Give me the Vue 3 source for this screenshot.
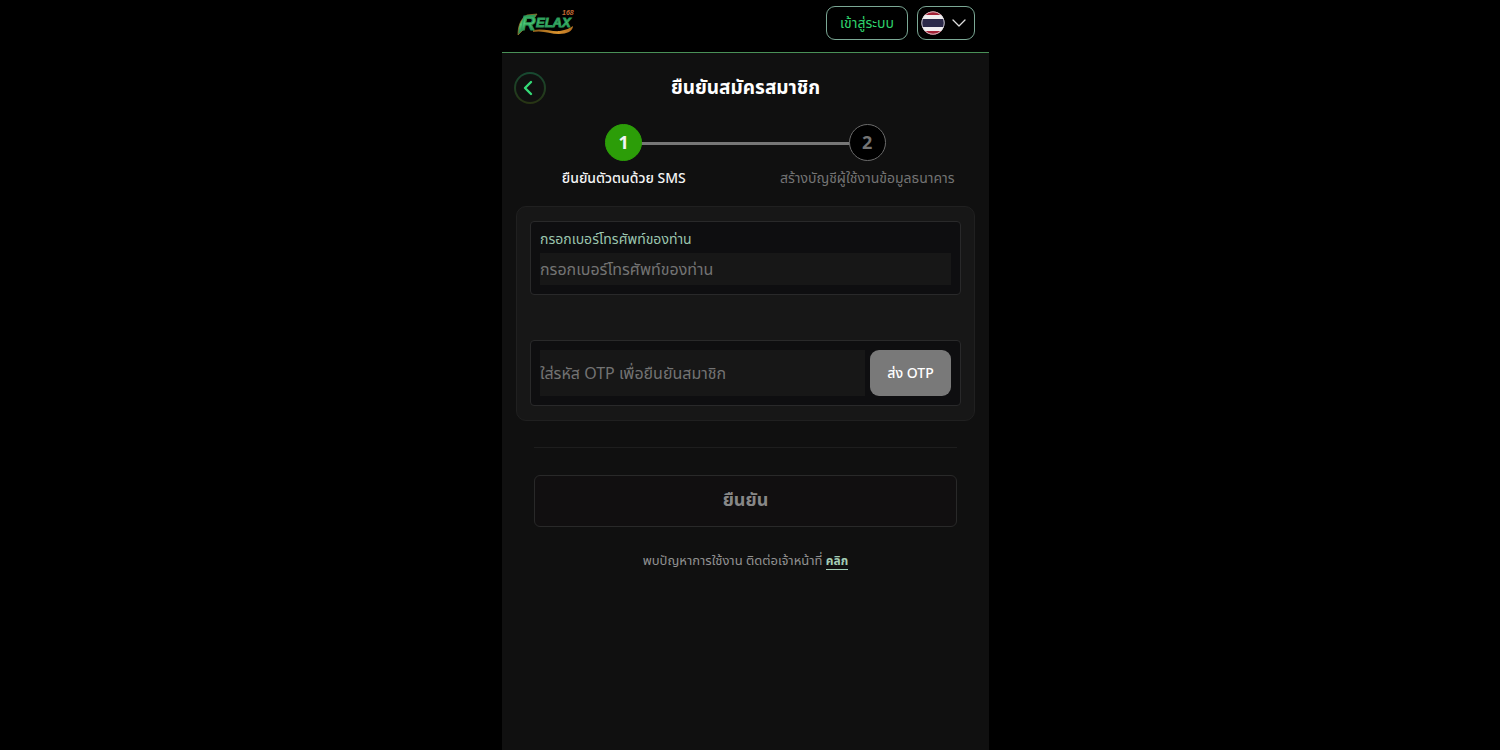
<script setup>
import { ref } from 'vue'

const phone = ref('')
const otp = ref('')
</script>

<template>
  <div class="page">
    <div class="shell">
      <header class="topbar">
        <a href="#" class="logo" aria-label="RELAX 168">
          <svg width="60" height="28" viewBox="0 0 60 28">
            <defs>
              <linearGradient id="leaf" x1="0" y1="0" x2="0" y2="1">
                <stop offset="0" stop-color="#1f9355" />
                <stop offset="0.5" stop-color="#4fca76" />
                <stop offset="1" stop-color="#1b7a4a" />
              </linearGradient>
              <linearGradient id="gold" x1="0" y1="0" x2="1" y2="0">
                <stop offset="0" stop-color="#8d5a18" />
                <stop offset="0.6" stop-color="#dc942e" />
                <stop offset="1" stop-color="#b06a20" />
              </linearGradient>
            </defs>
            <path d="M17 21 C28 19 36 23 44 22 C50 21 54 19 57 17 C57 22 51 25 43 25 C34 25 27 21 17 23 Z" fill="url(#gold)" />
            <path d="M2 26 C2 18 4 10 11 6 L21 5 L19 8 L11 9 L7 21 Z" fill="url(#leaf)" stroke="#a5792a" stroke-width="0.7" />
            <text x="5" y="21" class="logo-initial" fill="url(#leaf)">R</text>
            <text x="20" y="18" class="logo-name" fill="url(#leaf)">ELAX</text>
            <text x="46" y="6" class="logo-number" fill="#c56b34">168</text>
          </svg>
        </a>
        <div class="actions">
          <button type="button" class="outline login">เข้าสู่ระบบ</button>
          <button type="button" class="outline language" aria-label="ไทย">
            <svg width="24" height="24" viewBox="0 0 24 24">
              <defs>
                <clipPath id="flag-round"><circle cx="12" cy="12" r="11.5" /></clipPath>
              </defs>
              <g clip-path="url(#flag-round)">
                <rect width="24" height="24" fill="#f0eef0" />
                <rect width="24" height="4" fill="#a32236" />
                <rect y="8" width="24" height="8" fill="#2b2949" />
                <rect y="20" width="24" height="4" fill="#a32236" />
              </g>
              <circle cx="12" cy="12" r="11.2" fill="none" stroke="#e2dee2" stroke-width="0.7" />
            </svg>
            <svg width="16" height="10" viewBox="0 0 16 10" fill="none" stroke="#dedede" stroke-width="1.3" stroke-linecap="round" stroke-linejoin="round">
              <path d="M2 2 L8 8 L14 2" />
            </svg>
          </button>
        </div>
      </header>

      <main class="content">
        <div class="heading">
          <button type="button" class="back" aria-label="กลับ">
            <svg width="10" height="16" viewBox="0 0 10 16" fill="none" stroke="#35da77" stroke-width="2.4" stroke-linecap="round" stroke-linejoin="round">
              <path d="M8 2 L2 8 L8 14" />
            </svg>
          </button>
          <h1>ยืนยันสมัครสมาชิก</h1>
        </div>

        <ol class="steps">
          <li class="step active">
            <span class="number">1</span>
            <span class="caption">ยืนยันตัวตนด้วย SMS</span>
          </li>
          <li class="step">
            <span class="number">2</span>
            <span class="caption">สร้างบัญชีผู้ใช้งานข้อมูลธนาคาร</span>
          </li>
        </ol>

        <form @submit.prevent>
          <section class="card">
            <div class="field">
              <label for="phone">กรอกเบอร์โทรศัพท์ของท่าน</label>
              <input id="phone" v-model="phone" type="tel" placeholder="กรอกเบอร์โทรศัพท์ของท่าน" />
            </div>
            <div class="field otp">
              <input v-model="otp" type="text" inputmode="numeric" aria-label="ใส่รหัส OTP" placeholder="ใส่รหัส OTP เพื่อยืนยันสมาชิก" />
              <button type="button" class="send">ส่ง OTP</button>
            </div>
          </section>
          <div class="confirm">
            <button type="submit">ยืนยัน</button>
          </div>
        </form>

        <p class="help">พบปัญหาการใช้งาน ติดต่อเจ้าหน้าที่ <a href="#">คลิก</a></p>
      </main>
    </div>
  </div>
</template>

<style>
body {
  background: #000;
}
</style>

<style scoped>
.page,
.page * {
  box-sizing: border-box;
}

.page {
  min-height: 100vh;
  padding-right: 9px;
  display: flex;
  justify-content: center;
  background: #000;
  color: #fff;
  font-family: "Noto Sans", "Noto Sans Thai", sans-serif;
}

button,
input {
  font-family: inherit;
}

button {
  cursor: pointer;
}

.shell {
  width: 100%;
  max-width: 487px;
  background: #101010;
}

.topbar {
  height: 53px;
  padding: 0 14px 6px;
  display: flex;
  align-items: center;
  justify-content: space-between;
  background: #000;
  border-bottom: 1px solid #499057;
}

.logo,
.logo svg,
.outline svg,
.back svg {
  display: block;
}

.logo-initial,
.logo-name,
.logo-number {
  font-family: "Liberation Sans", Arial, sans-serif;
  font-weight: 700;
  font-style: italic;
}

.logo-initial {
  font-size: 20px;
  stroke: #2b9a58;
  stroke-width: 1px;
}

.logo-name {
  font-size: 13px;
  stroke: #2b9a58;
  stroke-width: 1px;
}

.logo-number {
  font-size: 7px;
}

.actions {
  display: flex;
  gap: 9px;
}

.outline {
  height: 34px;
  padding: 0;
  display: flex;
  align-items: center;
  justify-content: center;
  background: #000;
  border: 1px solid #7ba895;
  border-radius: 9px;
}

.login {
  width: 82px;
  color: #2fd36c;
  font-size: 14px;
}

.language {
  width: 58px;
  padding-right: 4px;
  gap: 6px;
}

.content {
  padding: 19px 14px 0;
}

.heading {
  display: grid;
  grid-template-columns: 32px 1fr 32px;
  align-items: center;
  margin: 0 -2px;
}

.back {
  width: 32px;
  height: 32px;
  padding: 0 4px 0 0;
  display: flex;
  align-items: center;
  justify-content: center;
  border: 2px solid transparent;
  border-radius: 50%;
  background: linear-gradient(#101010, #101010) padding-box, linear-gradient(#174a32, #283413) border-box;
}

h1 {
  margin: 0;
  padding-bottom: 2px;
  text-align: center;
  font-size: 19px;
  line-height: 28px;
  font-weight: 700;
}

.steps {
  margin: 20px -14px 0;
  padding: 0;
  display: grid;
  grid-template-columns: 1fr 1fr;
  list-style: none;
}

.step {
  position: relative;
  display: flex;
  flex-direction: column;
  align-items: center;
  color: #747474;
}

.step.active {
  color: #f4f4f4;
}

.step.active::after {
  content: "";
  position: absolute;
  top: 18px;
  left: 50%;
  width: 100%;
  height: 3px;
  background: #777;
}

.number {
  position: relative;
  z-index: 1;
  width: 37px;
  height: 37px;
  border: 1px solid #6b6b6b;
  border-radius: 50%;
  background: #000;
  text-align: center;
  font-size: 18px;
  line-height: 34px;
  font-weight: 700;
}

.active .number {
  background: #2c9d08;
  border-color: #2c9d08;
}

.caption {
  margin-top: 7px;
  font-size: 14px;
  line-height: 20px;
}

.active .caption {
  font-weight: 500;
}

.card {
  margin-top: 18px;
  padding: 14px 13px;
  background: #171717;
  border: 1px solid #202020;
  border-radius: 10px;
}

.field {
  padding: 9px;
  background: #0e0e10;
  border: 1px solid #29292a;
  border-radius: 4px;
}

.field label {
  display: block;
  color: #9bc5ae;
  font-size: 14px;
  line-height: 16px;
}

.field input {
  display: block;
  width: 100%;
  height: 32px;
  margin: 0;
  padding: 0;
  background: #171717;
  border: 0;
  border-radius: 0;
  color: #ddd;
  font-size: 16px;
}

.field label + input {
  margin-top: 6px;
}

.field input::placeholder {
  color: #737373;
  opacity: 1;
}

.otp {
  display: flex;
  gap: 5px;
  margin-top: 45px;
}

.field.otp input {
  flex: 1;
  min-width: 0;
  height: 46px;
}

.send {
  width: 81px;
  height: 46px;
  padding: 0;
  background: #797979;
  border: 0;
  border-radius: 9px;
  color: #fff;
  font-size: 14px;
  font-weight: 500;
}

.confirm {
  margin: 26px 18px 0;
  padding-top: 27px;
  border-top: 1px solid #1e1e1e;
}

.confirm button {
  display: block;
  width: 100%;
  height: 52px;
  padding: 0 0 2px;
  background: #110f10;
  border: 1px solid #292929;
  border-radius: 6px;
  color: #878787;
  font-size: 18px;
  font-weight: 700;
}

.help {
  margin: 23px 0 0;
  text-align: center;
  color: #929292;
  font-size: 13px;
  line-height: 20px;
}

.help a {
  color: #a4cdb6;
  font-size: 12px;
  font-weight: 700;
  text-decoration: none;
  border-bottom: 1px solid #a4cdb6;
}
</style>
